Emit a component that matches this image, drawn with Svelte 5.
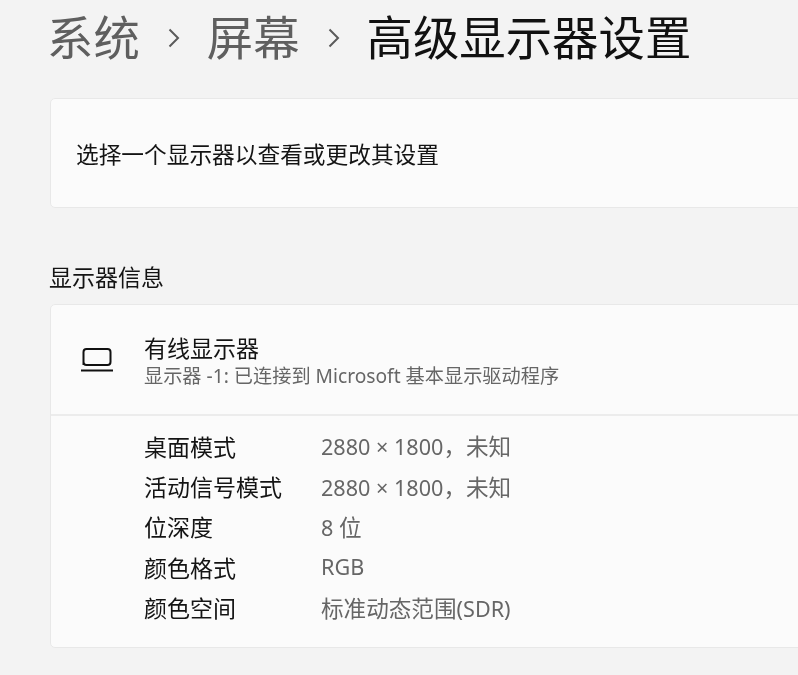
<script lang="ts">
  const crumbs = ["系统", "屏幕"];
  const rows = [
    ["桌面模式", "2880 × 1800，未知"],
    ["活动信号模式", "2880 × 1800，未知"],
    ["位深度", "8 位"],
    ["颜色格式", "RGB"],
    ["颜色空间", "标准动态范围(SDR)"],
  ];

  // latin runs sit a little smaller than the CJK ones in the original font
  const runs = (text: string) => text.split(/([\u4e00-\u9fff，]+)/).filter(Boolean);
  const isCjk = (run: string) => /[\u4e00-\u9fff，]/.test(run);
</script>

<div class="page">
  <h1 class="crumbs">
    {#each crumbs as crumb}
      <span class="parent">{crumb}</span>
      <svg class="chevron" viewBox="0 0 12 20" aria-hidden="true">
        <path d="M1.5 1.5 L10 10 L1.5 18.5" />
      </svg>
    {/each}
    <span class="current">高级显示器设置</span>
  </h1>

  <div class="card picker">选择一个显示器以查看或更改其设置</div>

  <h2 class="section">显示器信息</h2>

  <div class="card info">
    <div class="head">
      <svg class="laptop" viewBox="0 0 34 24" aria-hidden="true">
        <path d="M3.5 17 V4 Q3.5 1 6.5 1 H27.5 Q30.5 1 30.5 4 V14 Q30.5 17 27.5 17 H6.5 Q3.5 17 3.5 14 Z" />
        <path d="M1 22.5 H33" />
      </svg>
      <div class="titles">
        <div class="name">有线显示器</div>
        <div class="sub">显示器 -1: 已连接到 Microsoft 基本显示驱动程序</div>
      </div>
    </div>
    <div class="rows">
      {#each rows as [label, value]}
        <div class="label">{label}</div>
        <div class="value">
          {#each runs(value) as run}
            <span class:latin={!isCjk(run)}>{run}</span>
          {/each}
        </div>
      {/each}
    </div>
  </div>
</div>

<style>
  :global(body) {
    background: #f3f3f3;
    overflow: hidden;
  }

  .page {
    height: 675px;
    overflow: hidden;
    padding-left: 50px;
    font-family: "Noto Sans", "Noto Sans CJK SC", sans-serif;
    color: #141414;
    box-sizing: border-box;
    filter: blur(0.4px);
  }

  .crumbs {
    display: flex;
    align-items: center;
    height: 70px;
    margin: 0 0 0 -3px;
    font-size: 46.4px;
    font-weight: 400;
    white-space: nowrap;
  }

  .parent {
    color: #5f5f5f;
  }

  .chevron {
    flex: none;
    width: 12px;
    height: 20px;
    margin: 5px 27px 0 28px;
    fill: none;
    stroke: #5a5a5a;
    stroke-width: 2;
  }

  .current {
    color: #111;
  }

  .card {
    margin-right: -20px;
    background: #fbfbfb;
    border: 1px solid #e8e8e8;
    border-radius: 5px;
  }

  .picker {
    display: flex;
    align-items: center;
    height: 110px;
    margin-top: 28px;
    padding-left: 25px;
    box-sizing: border-box;
    font-size: 22.7px;
  }

  .section {
    margin: 53px 0 0 -1px;
    font-size: 23px;
    font-weight: 400;
    line-height: 32px;
  }

  .info {
    margin-top: 11px;
    height: 344px;
    box-sizing: border-box;
  }

  .head {
    display: flex;
    align-items: center;
    height: 109px;
    border-bottom: 2px solid #ececec;
  }

  .laptop {
    flex: none;
    width: 34px;
    height: 24px;
    margin-left: 29px;
    fill: none;
    stroke: #111;
    stroke-width: 2;
  }

  .titles {
    margin-left: 30px;
    padding-top: 3px;
  }

  .name {
    font-size: 23px;
    line-height: 28px;
  }

  .sub {
    font-size: 19.2px;
    line-height: 27px;
    color: #666;
  }

  .rows {
    display: grid;
    grid-template-columns: 177px 1fr;
    grid-auto-rows: 40.4px;
    align-items: center;
    padding: 9.5px 0 0 93px;
    font-size: 23px;
  }

  .value {
    font-size: 22.6px;
    color: #666;
    white-space: nowrap;
  }

  .latin {
    font-size: 21.6px;
  }
</style>
